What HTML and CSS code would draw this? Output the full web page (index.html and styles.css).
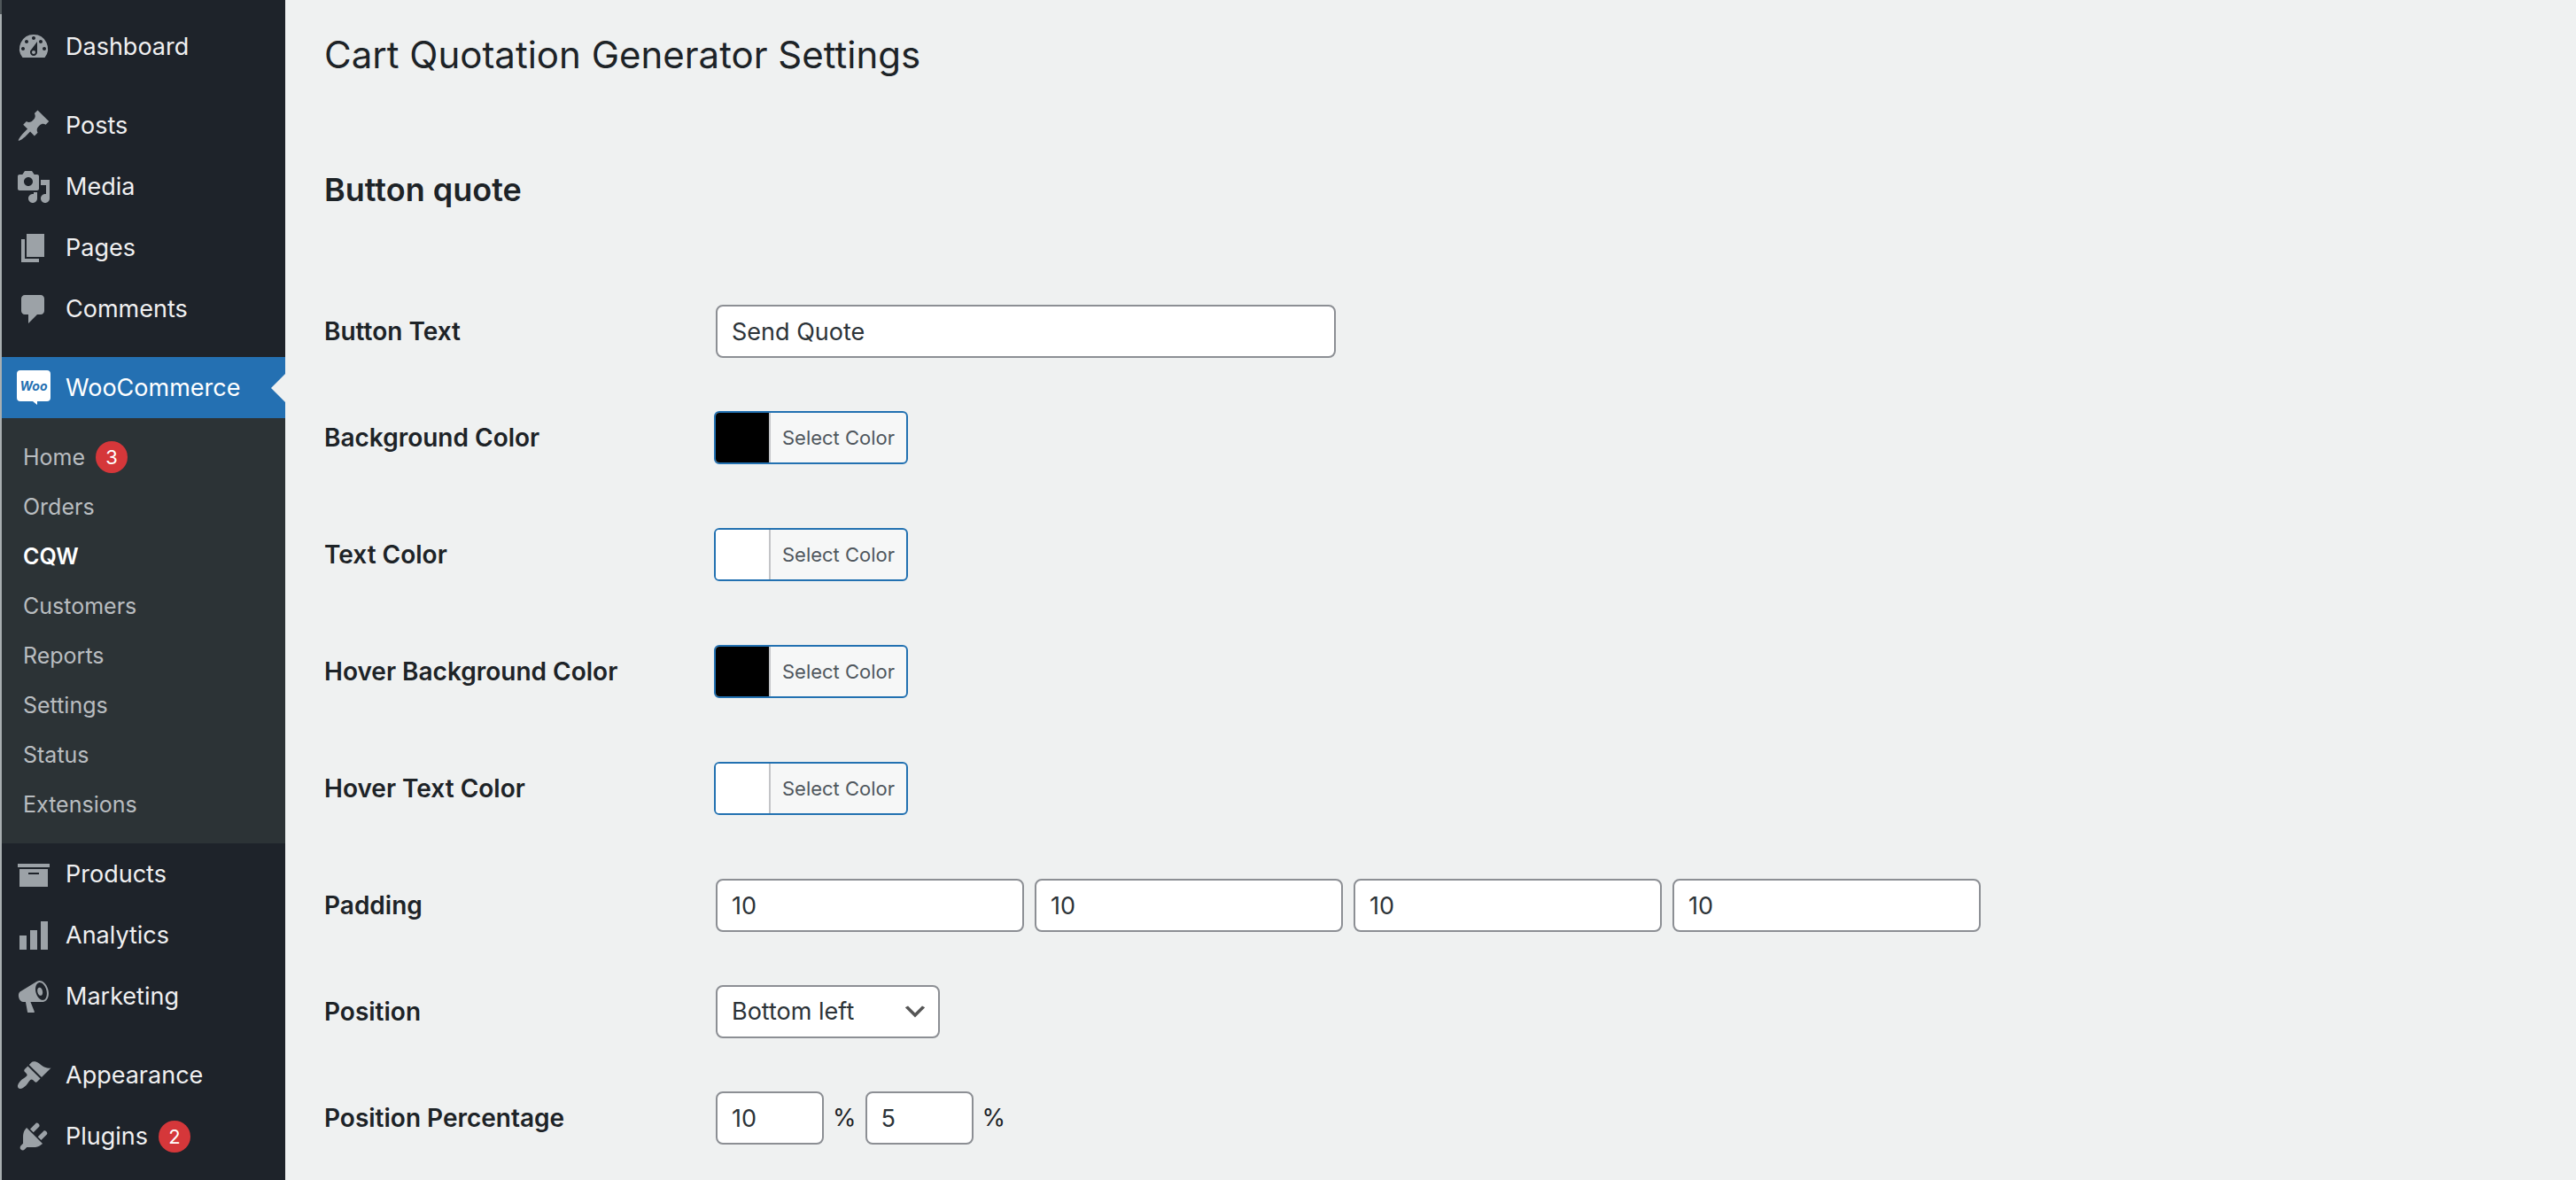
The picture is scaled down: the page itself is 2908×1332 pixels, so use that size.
FILE: index.html
```html
<!DOCTYPE html>
<html lang="en">
<head>
<meta charset="utf-8">
<title>Cart Quotation Generator Settings</title>
<link rel="stylesheet" href="styles.css">
</head>
<body>
<div class="layout">
  <nav class="sidebar" aria-label="Main menu">
    <ul class="menu">
      <li><a class="item" href="#"><svg class="icon" viewBox="0 0 20 20"><path d="M3.76 16h12.48A7.998 7.998 0 0 0 10 3a7.998 7.998 0 0 0-6.24 13zM10 4c.55 0 1 .45 1 1s-.45 1-1 1-1-.45-1-1 .45-1 1-1zM6 6c.55 0 1 .45 1 1s-.45 1-1 1-1-.45-1-1 .45-1 1-1zm8 0c.55 0 1 .45 1 1s-.45 1-1 1-1-.45-1-1 .45-1 1-1zm-5.37 5.55L12 7v6c0 1.1-.9 2-2 2s-2-.9-2-2c0-.57.24-1.08.63-1.45zM4 10c.55 0 1 .45 1 1s-.45 1-1 1-1-.45-1-1 .45-1 1-1zm12 0c.55 0 1 .45 1 1s-.45 1-1 1-1-.45-1-1 .45-1 1-1zm-5 3c0-.55-.45-1-1-1s-1 .45-1 1 .45 1 1 1 1-.45 1-1z"/></svg>Dashboard</a></li>
      <li class="group-start"><a class="item" href="#"><svg class="icon" viewBox="0 0 20 20"><path d="M10.44 3.02l1.82-1.82 6.36 6.35-1.83 1.82c-1.05-.68-2.48-.57-3.41.36l-.75.75c-.92.93-1.04 2.35-.35 3.41l-1.83 1.82-2.41-2.41-2.8 2.79c-.42.42-3.38 2.71-3.8 2.29s1.86-3.39 2.28-3.81l2.79-2.79L4.1 9.36l1.83-1.82c1.05.69 2.48.57 3.4-.36l.75-.75c.93-.92 1.05-2.35.36-3.41z"/></svg>Posts</a></li>
      <li><a class="item" href="#"><svg class="icon" viewBox="0 0 20 20"><path d="M13 11V4c0-.55-.45-1-1-1h-1.67L9 1H5L3.67 3H2c-.55 0-1 .45-1 1v7c0 .55.45 1 1 1h10c.55 0 1-.45 1-1zM7 4.5c1.38 0 2.5 1.12 2.5 2.5S8.38 9.5 7 9.5 4.5 8.38 4.5 7 5.62 4.5 7 4.5zM14 6h5v10.5c0 1.38-1.12 2.5-2.5 2.5S14 17.88 14 16.5s1.12-2.5 2.5-2.5c.17 0 .34.02.5.05V9h-3V6zm-4 8.05V13h2v3.5c0 1.38-1.12 2.5-2.5 2.5S7 17.88 7 16.5 8.12 14 9.5 14c.17 0 .34.02.5.05z"/></svg>Media</a></li>
      <li><a class="item" href="#"><svg class="icon" viewBox="0 0 20 20"><path d="M6 15V2h10v13H6zm-1 1h8v2H3V5h2v11z"/></svg>Pages</a></li>
      <li><a class="item" href="#"><svg class="icon" viewBox="0 0 20 20"><path d="M5 2h9c1.1 0 2 .9 2 2v7c0 1.1-.9 2-2 2h-2l-5 5v-5H5c-1.1 0-2-.9-2-2V4c0-1.1.9-2 2-2z"/></svg>Comments</a></li>
      <li class="group-start">
        <a class="item current" href="#"><svg class="icon" viewBox="0 0 40 40"><path d="M5 0h30c2.600 0 4 1.400 4 4v27c0 2.600-1.400 4-4 4H24v4l-5-4H5c-2.600 0-4-1.400-4-4V4c0-2.600 1.400-4 4-4z"/><text class="woo" x="20" y="23" text-anchor="middle">Woo</text></svg>WooCommerce</a>
        <ul class="submenu">
          <li><a href="#">Home <span class="badge">3</span></a></li>
          <li><a href="#">Orders</a></li>
          <li><a class="active" href="#" aria-current="page">CQW</a></li>
          <li><a href="#">Customers</a></li>
          <li><a href="#">Reports</a></li>
          <li><a href="#">Settings</a></li>
          <li><a href="#">Status</a></li>
          <li><a href="#">Extensions</a></li>
        </ul>
      </li>
      <li><a class="item" href="#"><svg class="icon" viewBox="0 0 20 20"><path d="M19 4v2H1V4h18zM2 7h16v10H2V7zm11 3V9H7v1h6z"/></svg>Products</a></li>
      <li><a class="item" href="#"><svg class="icon" viewBox="0 0 20 20"><path d="M18 18V2h-4v16h4zm-6 0V7H8v11h4zm-6 0v-8H2v8h4z"/></svg>Analytics</a></li>
      <li><a class="item" href="#"><svg class="icon" viewBox="0 0 20 20"><path d="M18.15 5.94c.46 1.62.38 3.22-.02 4.48-.42 1.28-1.26 2.18-2.3 2.48-.16.06-.26.06-.4.06-.06.02-.12.02-.18.02-.06.02-.14.02-.22.02h-6.8l2.22 5.5c.02.14-.06.26-.14.34-.08.1-.24.16-.34.16H6.95c-.1 0-.26-.06-.34-.16-.08-.08-.16-.2-.14-.34l-1-5.5H4.25l-.02-.02c-.5.06-1.08-.18-1.54-.62s-.88-1.08-1.06-1.88c-.24-.8-.2-1.56-.02-2.2.18-.62.58-1.08 1.06-1.3l.02-.02 9-5.4c.1-.06.18-.1.24-.16.06-.04.14-.08.24-.12.16-.08.28-.12.5-.18 1.04-.3 2.24.1 3.22.98s1.84 2.24 2.26 3.86zm-2.58 5.98h-.02c.4-.1.74-.34 1.04-.7.58-.7.86-1.76.86-3.04 0-.64-.1-1.3-.28-1.98-.34-1.36-1.02-2.5-1.78-3.24s-1.68-1.1-2.46-.88c-.82.22-1.4.96-1.7 2-.32 1.04-.28 2.36.06 3.72.38 1.36 1 2.5 1.8 3.24.78.74 1.62 1.1 2.48.88zm-2.54-7.08c.22-.04.42-.02.62.04.38.16.76.48 1.02 1s.42 1.2.42 1.78c0 .3-.04.56-.12.8-.18.48-.44.84-.86.94-.34.1-.8-.06-1.14-.4s-.64-.86-.78-1.5c-.18-.62-.12-1.24.02-1.72s.48-.84.82-.94z"/></svg>Marketing</a></li>
      <li class="group-start"><a class="item" href="#"><svg class="icon" viewBox="0 0 20 20"><path d="M14.48 11.06L7.41 3.99l1.5-1.5c.5-.56 2.3-.47 3.51.32 1.21.8 1.43 1.28 2.91 2.1 1.18.64 2.45 1.26 4.45.85zm-.71.71L6.7 4.7 4.93 6.47c-.39.39-.39 1.02 0 1.41l1.06 1.06c.39.39.39 1.03 0 1.42-.6.6-1.43 1.11-2.21 1.69-.35.26-.7.53-1.01.84C1.43 14.23.4 16.08 1.4 17.07c.99 1 2.84-.03 4.18-1.36.31-.31.58-.66.85-1.02.57-.78 1.08-1.61 1.69-2.21.39-.39 1.02-.39 1.41 0l1.06 1.06c.39.39 1.02.39 1.41 0z"/></svg>Appearance</a></li>
      <li><a class="item" href="#"><svg class="icon" viewBox="0 0 20 20"><path d="M13.11 4.36L9.87 7.6 8 5.73l3.24-3.24c.35-.34 1.05-.2 1.56.32.52.51.66 1.21.31 1.55zm-8 1.77l.91-1.12 9.01 9.01-1.19.84c-.71.71-2.63 1.16-3.82 1.16H6.14L4.9 17.26c-.59.59-1.54.59-2.12 0-.59-.58-.59-1.53 0-2.12l1.24-1.24v-3.88c0-1.13.4-3.19 1.09-3.89zm7.26 3.97l3.24-3.24c.34-.35 1.04-.21 1.55.31.52.51.66 1.21.31 1.55l-3.24 3.25z"/></svg>Plugins <span class="badge">2</span></a></li>
    </ul>
  </nav>
  <main class="content">
    <h1>Cart Quotation Generator Settings</h1>
    <h2>Button quote</h2>
    <form class="settings">
      <div class="row">
        <label for="button-text">Button Text</label>
        <div class="field"><input class="control wide" id="button-text" type="text" value="Send Quote"></div>
      </div>
      <div class="row color-row">
        <label for="bg-color">Background Color</label>
        <div class="field"><button class="picker" id="bg-color" type="button"><span class="swatch black"></span><span class="picker-text">Select Color</span></button></div>
      </div>
      <div class="row color-row">
        <label for="text-color">Text Color</label>
        <div class="field"><button class="picker" id="text-color" type="button"><span class="swatch white"></span><span class="picker-text">Select Color</span></button></div>
      </div>
      <div class="row color-row">
        <label for="hover-bg-color">Hover Background Color</label>
        <div class="field"><button class="picker" id="hover-bg-color" type="button"><span class="swatch black"></span><span class="picker-text">Select Color</span></button></div>
      </div>
      <div class="row color-row">
        <label for="hover-text-color">Hover Text Color</label>
        <div class="field"><button class="picker" id="hover-text-color" type="button"><span class="swatch white"></span><span class="picker-text">Select Color</span></button></div>
      </div>
      <div class="row">
        <label for="padding-top">Padding</label>
        <div class="field sides">
          <input class="control side" id="padding-top" type="text" value="10">
          <input class="control side" type="text" value="10" aria-label="Padding right">
          <input class="control side" type="text" value="10" aria-label="Padding bottom">
          <input class="control side" type="text" value="10" aria-label="Padding left">
        </div>
      </div>
      <div class="row">
        <label for="position">Position</label>
        <div class="field"><select class="control select" id="position"><option>Bottom left</option><option>Bottom right</option></select></div>
      </div>
      <div class="row">
        <label for="position-x">Position Percentage</label>
        <div class="field percents">
          <input class="control small" id="position-x" type="text" value="10"><span>%</span>
          <input class="control small" type="text" value="5" aria-label="Vertical position"><span>%</span>
        </div>
      </div>
    </form>
  </main>
</div>
</body>
</html>
```
FILE: styles.css
```css
* {
  box-sizing: border-box;
}

body {
  margin: 0;
  background: #eff1f1;
  color: #1d2327;
  font-family: Inter, "Liberation Sans", sans-serif;
  font-size: 27px;
  line-height: 36px;
}

ul {
  margin: 0;
  padding: 0;
  list-style: none;
}

.layout {
  display: flex;
  min-height: 100vh;
  padding-left: 2px;
  background: linear-gradient(#50575a 16px, #a9afb1 16px) left / 2px 100% no-repeat;
}

/* Sidebar */

.sidebar {
  flex: none;
  width: 320px;
  padding-top: 18px;
  background: #1e232a;
}

.group-start {
  margin-top: 20px;
}

.item {
  position: relative;
  display: flex;
  align-items: center;
  height: 69px;
  padding-left: 16px;
  color: #f0f0f1;
  text-decoration: none;
}

.icon {
  width: 40px;
  height: 40px;
  margin-right: 16px;
  fill: #9ca2a7;
}

.current {
  background: #2470b2;
  color: #fff;
}

.current .icon {
  fill: #fff;
}

.current::after {
  content: "";
  position: absolute;
  top: 50%;
  right: 0;
  margin-top: -16px;
  border: 16px solid transparent;
  border-left-width: 0;
  border-right-color: #eff1f1;
}

.current .woo {
  fill: #2470b2;
  font-size: 14px;
  font-style: italic;
  font-weight: 700;
}

.submenu {
  padding: 16px 0;
  background: #2c3336;
  font-size: 25px;
}

.submenu a {
  display: flex;
  align-items: center;
  height: 56px;
  padding-left: 24px;
  color: #b9bdc0;
  text-decoration: none;
}

.submenu .active {
  color: #fff;
  font-weight: 600;
}

.badge {
  width: 36px;
  height: 36px;
  margin-left: 12px;
  border-radius: 18px;
  background: #d5373a;
  color: #fff;
  font-size: 22px;
  text-align: center;
}

/* Settings page */

.content {
  flex: 1;
  padding: 32px 44px;
}

h1 {
  margin: 0;
  font-size: 42px;
  font-weight: 400;
  line-height: 60px;
}

h2 {
  margin: 98px 0 76px;
  font-size: 36px;
  font-weight: 600;
  line-height: 48px;
}

.row {
  display: grid;
  grid-template-columns: 440px 1fr;
  align-items: center;
  padding: 30px 0;
}

.row label {
  font-size: 28px;
  font-weight: 600;
}

.color-row {
  padding-bottom: 42px;
}

.field {
  display: flex;
  align-items: center;
}

.control {
  height: 60px;
  margin: 0 2px;
  padding: 0 16px;
  border: 2px solid #8c8f94;
  border-radius: 8px;
  background: #fff;
  color: #2c3338;
  font: inherit;
}

.wide {
  width: 700px;
}

.sides {
  gap: 8px;
}

.side {
  width: 348px;
}

.small {
  width: 122px;
}

.percents {
  gap: 8px;
}

.select {
  width: 253px;
  appearance: none;
  background: #fff url("data:image/svg+xml,%3Csvg xmlns='http://www.w3.org/2000/svg' viewBox='0 0 20 20'%3E%3Cpath d='M5 6l5 5 5-5 2 1-7 7-7-7 2-1z' fill='%23555'/%3E%3C/svg%3E") no-repeat right 10px center / 32px 32px;
}

.picker {
  display: flex;
  width: 219px;
  height: 60px;
  padding: 0;
  overflow: hidden;
  border: 2px solid #2271b1;
  border-radius: 6px;
  background: #f6f7f7;
  color: #50575e;
  font: inherit;
  font-size: 22px;
  line-height: 56px;
}

.swatch {
  width: 60px;
  height: 56px;
}

.black {
  background: #000;
}

.white {
  background: #fff;
}

.picker-text {
  flex: 1;
  border-left: 2px solid #c3c4c7;
  text-align: center;
}
```
